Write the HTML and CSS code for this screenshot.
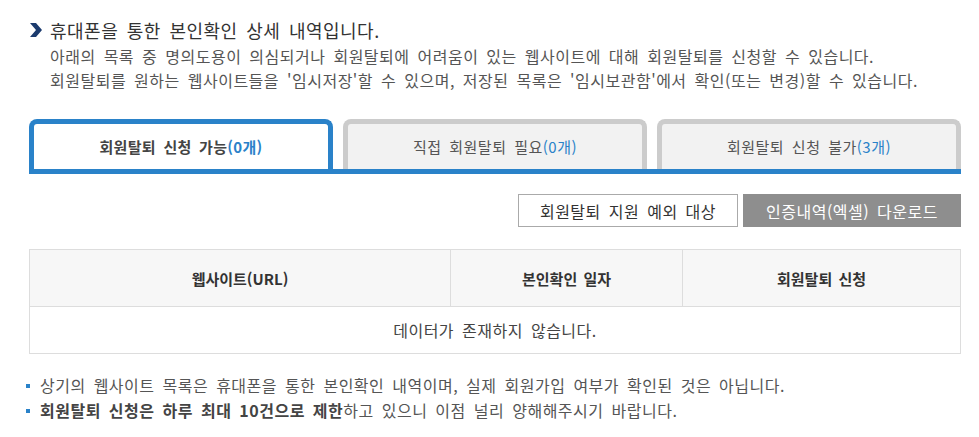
FILE: index.html
```html
<!DOCTYPE html>
<html lang="ko">
<head>
    <meta charset="UTF-8">
    <meta name="viewport" content="width=device-width, initial-scale=1.0">
    <title>본인확인 상세 내역</title>
    <link rel="stylesheet" href="styles.css">
</head>
<body>
    <div class="container">
        <div class="intro">
            <h1 class="title">
                <svg class="chevron" width="14" height="14" viewBox="0 0 14 14">
                    <polygon points="1,0 7,0 13,7 7,14 1,14 7,7" fill="#1c3b6e"/>
                </svg>
                휴대폰을 통한 본인확인 상세 내역입니다.
            </h1>
            <p>아래의 목록 중 명의도용이 의심되거나 회원탈퇴에 어려움이 있는 웹사이트에 대해 회원탈퇴를 신청할 수 있습니다.</p>
            <p>회원탈퇴를 원하는 웹사이트들을 '임시저장'할 수 있으며, 저장된 목록은 '임시보관함'에서 확인(또는 변경)할 수 있습니다.</p>
        </div>

        <ul class="tabs">
            <li class="tab active">회원탈퇴 신청 가능<span class="count">(0개)</span></li>
            <li class="tab">직접 회원탈퇴 필요<span class="count">(0개)</span></li>
            <li class="tab">회원탈퇴 신청 불가<span class="count">(3개)</span></li>
        </ul>

        <div class="button-row">
            <button type="button" class="btn btn-line">회원탈퇴 지원 예외 대상</button>
            <button type="button" class="btn btn-gray">인증내역(엑셀) 다운로드</button>
        </div>

        <table class="list">
            <thead>
                <tr>
                    <th class="col-site">웹사이트(URL)</th>
                    <th class="col-date">본인확인 일자</th>
                    <th class="col-apply">회원탈퇴 신청</th>
                </tr>
            </thead>
            <tbody>
                <tr>
                    <td colspan="3">데이터가 존재하지 않습니다.</td>
                </tr>
            </tbody>
        </table>

        <ul class="notes">
            <li>상기의 웹사이트 목록은 휴대폰을 통한 본인확인 내역이며, 실제 회원가입 여부가 확인된 것은 아닙니다.</li>
            <li><strong>회원탈퇴 신청은 하루 최대 10건으로 제한</strong>하고 있으니 이점 널리 양해해주시기 바랍니다.</li>
        </ul>
    </div>
</body>
</html>
```

FILE: styles.css
```css
body {
    margin: 0;
    padding: 0;
    background-color: #fff;
    font-family: "Noto Sans CJK KR", "Noto Sans", sans-serif;
    font-size: 16px;
    color: #555;
    letter-spacing: 0.5px;
    word-spacing: 3px;
}
.container {
    width: 932px;
    margin-left: 29px;
}
.intro {
    padding-top: 18px;
}
.title {
    display: flex;
    align-items: center;
    margin: 0 0 2px 0;
    font-size: 18px;
    font-weight: normal;
    line-height: 24px;
    color: #333;
}
.chevron {
    margin: 0 7px 0 0;
    flex-shrink: 0;
}
.intro p {
    margin: 0 0 0 21px;
    line-height: 24px;
}
.tabs {
    display: flex;
    gap: 10px;
    list-style: none;
    margin: 27px 0 0 0;
    padding: 0;
    border-bottom: 5px solid #2a82c9;
}
.tab {
    flex: 1;
    height: 45px;
    line-height: 45px;
    text-align: center;
    font-size: 15px;
    border: 5px solid #cccccc;
    border-bottom: none;
    border-radius: 8px 8px 0 0;
    background-color: #f2f2f2;
    color: #555;
}
.tab.active {
    border-color: #2a82c9;
    background-color: #fff;
    font-weight: bold;
    color: #444;
    letter-spacing: 0.3px;
}
.count {
    color: #2a82c9;
}
.button-row {
    display: flex;
    justify-content: flex-end;
    gap: 5px;
    margin-top: 20px;
}
.btn {
    height: 33px;
    padding: 0;
    font-family: inherit;
    font-size: 16px;
    letter-spacing: 0.5px;
    word-spacing: 3px;
    cursor: pointer;
}
.btn-line {
    width: 220px;
    background-color: #fff;
    border: 1px solid #aaaaaa;
    color: #333;
}
.btn-gray {
    width: 218px;
    background-color: #8e8e8e;
    border: none;
    color: #fff;
}
.list {
    width: 100%;
    margin-top: 22px;
    border-collapse: collapse;
    border: 1px solid #dddddd;
}
.list th {
    height: 56px;
    padding: 0;
    background-color: #f7f7f7;
    border: 1px solid #dddddd;
    font-size: 15px;
    font-weight: bold;
    letter-spacing: 0;
    word-spacing: 2px;
    color: #333;
}
.col-site {
    width: 420px;
}
.col-date {
    width: 231px;
}
.list td {
    height: 46px;
    padding: 0;
    text-align: center;
    border: 1px solid #dddddd;
    color: #444;
}
.notes {
    list-style: none;
    margin: 19px 0 0 0;
    padding: 0;
}
.notes li {
    position: relative;
    padding-left: 11px;
    line-height: 25px;
}
.notes li::before {
    content: "";
    position: absolute;
    left: -3px;
    top: 11px;
    width: 4px;
    height: 4px;
    background-color: #2a82c9;
}
.notes strong {
    color: #444;
}
```
